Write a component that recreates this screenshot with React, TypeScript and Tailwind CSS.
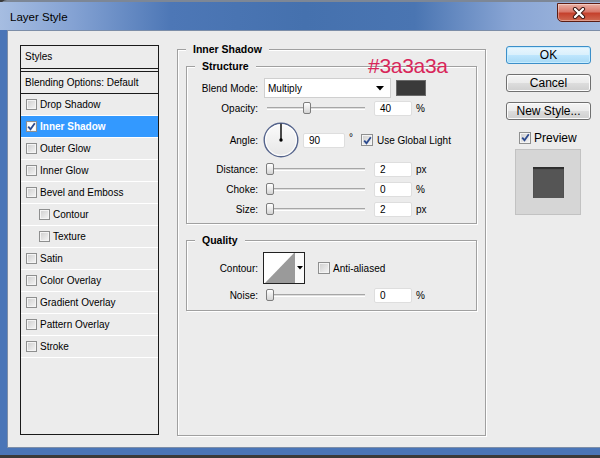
import React from "react";

const Check = ({ checked = false, small = false, selected = false }: { checked?: boolean; small?: boolean; selected?: boolean }) => (
  <div
    className={`${small ? "w-[11px] h-[11px]" : "w-[12px] h-[12px]"} shrink-0 border border-[#8e8f8f] ${
      selected ? "bg-white" : "bg-[linear-gradient(135deg,#cdcdcd,#f6f6f6)]"
    } shadow-[inset_0_0_0_1px_#f4f4f4] flex items-center justify-center`}
  >
    {checked && (
      <svg width="9" height="9" viewBox="0 0 9 9">
        <path d="M1.2 4.6 L3.5 7.2 L7.8 1.2" fill="none" stroke="#2c4a8e" strokeWidth="1.8" />
      </svg>
    )}
  </div>
);

const Slider = ({ pos }: { pos: number }) => (
  <div className="relative ml-[9px] w-[98px] h-[3px] border-t border-t-[#a6a6a6] border-b border-b-white bg-[#dedede]">
    <div
      className="absolute top-[-6px] w-[8px] h-[12px] rounded-[2px] border border-[#7d7d7d] bg-[linear-gradient(#ffffff,#d4d4d4)]"
      style={{ left: pos }}
    />
  </div>
);

const Field = ({ v, wide = false }: { v: string; wide?: boolean }) => (
  <div
    className={`${wide ? "w-[42px]" : "w-[38px]"} h-[15px] bg-white border border-[#dedede] rounded-[2px] pl-[5px] text-[10px] leading-[13px] text-black`}
  >
    {v}
  </div>
);

const Label = ({ t }: { t: string }) => (
  <div className="w-[71px] shrink-0 text-right text-[10px] leading-[13px] text-black">{t}</div>
);

const SliderRow = ({ label, value, unit, pos, mt }: { label: string; value: string; unit: string; pos: number; mt: string }) => (
  <div className={`flex items-center h-[15px] ${mt}`}>
    <Label t={label} />
    <Slider pos={pos} />
    <div className="ml-[9px]">
      <Field v={value} />
    </div>
    <div className="ml-[4px] text-[10px] leading-[13px]">{unit}</div>
  </div>
);

const items: { name: string; indent?: boolean; selected?: boolean }[] = [
  { name: "Drop Shadow" },
  { name: "Inner Shadow", selected: true },
  { name: "Outer Glow" },
  { name: "Inner Glow" },
  { name: "Bevel and Emboss" },
  { name: "Contour", indent: true },
  { name: "Texture", indent: true },
  { name: "Satin" },
  { name: "Color Overlay" },
  { name: "Gradient Overlay" },
  { name: "Pattern Overlay" },
  { name: "Stroke" },
];

const grayBtn =
  "w-[85px] h-[18px] rounded-[3px] border border-[#707070] bg-[linear-gradient(to_bottom,#f4f4f4_0%,#ebebeb_50%,#dddddd_51%,#cfcfcf_100%)] shadow-[inset_0_0_0_1px_#fcfcfc] text-[12px] leading-[16px] text-center text-black";

export default function App() {
  return (
    <div className="w-[600px] h-[458px] overflow-hidden bg-[#3a3a3a] font-['Liberation_Sans',Arial,sans-serif] text-black">
      <div className="w-[610px] h-[455px] flex flex-col rounded-tl-[7px] border-t-[2px] border-t-[#7d8796] bg-[#4a75b7]">
        {/* title bar */}
        <div className="h-[28px] shrink-0 flex items-start bg-[linear-gradient(to_right,#a6bde1_0%,#84a2d3_12%,#4d77b6_28%,#4571ae_50%,#4a75b2_68%,#8aa6d5_84%,#a3badf_100%)]">
          <div className="pl-[10px] pt-[8px] text-[11.5px] leading-[14px] text-black">Layer Style</div>
          <div className="ml-auto mr-[6px] mt-[1px] w-[47px] h-[19px] rounded-bl-[5px] rounded-br-[5px] border border-[#5b1d14] bg-[linear-gradient(to_bottom,#eab0a4_0%,#d9786a_45%,#c5412d_55%,#cf6a52_100%)] shadow-[inset_0_0_0_1px_rgba(255,255,255,0.35)] flex items-center justify-center">
            <svg width="14" height="12" viewBox="0 0 14 12" className="mr-[4px]">
              <path d="M3 2 L11 10 M11 2 L3 10" stroke="#3a1510" strokeWidth="4.2" strokeLinecap="round" />
              <path d="M3 2 L11 10 M11 2 L3 10" stroke="#ffffff" strokeWidth="2.4" strokeLinecap="round" />
            </svg>
          </div>
        </div>
        {/* content */}
        <div className="ml-[7px] mb-[7px] flex-1 border-l border-t border-b border-[#7d8ea8] bg-[#ececec] flex items-start pl-[12px]">
          {/* left styles panel */}
          <div className="mt-[14px] w-[139px] h-[390px] border border-[#1a1a1a] shrink-0 flex flex-col">
            <div className="h-[23px] border-b border-[#1a1a1a] pl-[4px] text-[10px] leading-[22px]">Styles</div>
            <div className="mt-[2px] h-[23px] border-t border-b border-[#1a1a1a] pl-[4px] text-[10px] leading-[21px]">
              Blending Options: Default
            </div>
            {items.map((it) => (
              <div
                key={it.name}
                className={`h-[22px] border-b border-white flex items-center ${it.indent ? "pl-[18px]" : "pl-[5px]"} ${
                  it.selected ? "bg-[#3399ff] text-white font-bold" : ""
                }`}
              >
                <Check small checked={it.selected} selected={it.selected} />
                <span className="ml-[3px] text-[10px] leading-[13px]">{it.name}</span>
              </div>
            ))}
          </div>

          {/* main group: Inner Shadow */}
          <div className="ml-[18px] mt-[18px] w-[309px] h-[387px] shrink-0 border border-[#a0a0a0] shadow-[inset_1px_1px_0_#fff,1px_1px_0_#fff]">
            <div className="-mt-[7px] ml-[8px] px-[7px] w-fit bg-[#ececec] text-[10.5px] font-bold leading-[13px]">Inner Shadow</div>

            {/* Structure */}
            <div className="relative ml-[8px] mt-[10px] w-[291px] h-[158px] border border-[#a0a0a0] shadow-[inset_1px_1px_0_#fff,1px_1px_0_#fff]">
              <div className="-mt-[7px] ml-[8px] px-[7px] w-fit bg-[#ececec] text-[10.5px] font-bold leading-[13px]">Structure</div>
              <div className="absolute left-[181px] top-[-13px] text-[21px] leading-[24px] tracking-[-0.3px] text-[#d8265a]">#3a3a3a</div>

              <div className="mt-[5px] flex items-center h-[20px]">
                <Label t="Blend Mode:" />
                <div className="ml-[6px] w-[127px] h-[20px] bg-white border border-[#cfcfcf] flex items-center pl-[3px] pr-[6px]">
                  <span className="text-[10px] leading-[13px]">Multiply</span>
                  <svg width="8" height="5" viewBox="0 0 8 5" className="ml-auto">
                    <path d="M0 0 L8 0 L4 4.5 Z" fill="#000" />
                  </svg>
                </div>
                <div className="ml-[5px] w-[30px] h-[16px] border border-[#6a6a6a] bg-[#3a3a3a]" />
              </div>

              <SliderRow label="Opacity:" value="40" unit="%" pos={36} mt="mt-[3px]" />

              <div className="mt-[6px] flex items-center h-[36px]">
                <Label t="Angle:" />
                <svg width="36" height="36" viewBox="0 0 36 36" className="ml-[5px] shrink-0">
                  <defs>
                    <linearGradient id="dialg" x1="0" y1="0" x2="0" y2="1">
                      <stop offset="0" stopColor="#fbfbfb" />
                      <stop offset="1" stopColor="#e6e6e6" />
                    </linearGradient>
                  </defs>
                  <circle cx="18" cy="18" r="16.8" fill="url(#dialg)" stroke="#55648c" strokeWidth="1.4" />
                  <circle cx="18" cy="18" r="15.4" fill="none" stroke="#ffffff" strokeWidth="1" />
                  <line x1="18" y1="1.8" x2="18" y2="18" stroke="#000" strokeWidth="1.4" />
                  <circle cx="18" cy="18" r="1.7" fill="#000" />
                </svg>
                <div className="ml-[4px]">
                  <Field v="90" wide />
                </div>
                <div className="ml-[4px] w-[12px] text-[10px] leading-[13px] self-start mt-[9px]">°</div>
                <Check checked />
                <span className="ml-[4px] text-[10px] leading-[13px]">Use Global Light</span>
              </div>

              <SliderRow label="Distance:" value="2" unit="px" pos={-1} mt="mt-[4px]" />
              <SliderRow label="Choke:" value="0" unit="%" pos={-1} mt="mt-[5px]" />
              <SliderRow label="Size:" value="2" unit="px" pos={-1} mt="mt-[5px]" />
            </div>

            {/* Quality */}
            <div className="ml-[8px] mt-[16px] w-[291px] h-[71px] border border-[#a0a0a0] shadow-[inset_1px_1px_0_#fff,1px_1px_0_#fff]">
              <div className="-mt-[7px] ml-[8px] px-[7px] w-fit bg-[#ececec] text-[10.5px] font-bold leading-[13px]">Quality</div>
              <div className="mt-[5px] flex items-center h-[32px]">
                <Label t="Contour:" />
                <div className="ml-[5px] w-[42px] h-[32px] border border-[#222] bg-white flex">
                  <svg width="30" height="30" viewBox="0 0 30 30" className="shrink-0">
                    <path d="M1 30 L30 0 L30 30 Z" fill="#9a9a9a" />
                  </svg>
                  <div className="flex-1 border-l border-[#9a9a9a] bg-[#fafafa] flex items-center justify-center">
                    <svg width="6" height="4" viewBox="0 0 6 4">
                      <path d="M0 0 L6 0 L3 3.5 Z" fill="#000" />
                    </svg>
                  </div>
                </div>
                <div className="ml-[13px]">
                  <Check />
                </div>
                <span className="ml-[3px] text-[10px] leading-[13px]">Anti-aliased</span>
              </div>
              <SliderRow label="Noise:" value="0" unit="%" pos={-1} mt="mt-[4px]" />
            </div>
          </div>

          {/* right column */}
          <div className="ml-[20px] mt-[15px] w-[85px] shrink-0 flex flex-col">
            <div className="w-[85px] h-[18px] rounded-[3px] border border-[#3c8fc9] bg-[linear-gradient(to_bottom,#eaf6fd_0%,#d9f0fc_50%,#bee6fd_51%,#a7d9f5_100%)] shadow-[inset_0_0_0_1px_#c6ecff] text-[12px] leading-[16px] text-center text-black">
              OK
            </div>
            <div className={`${grayBtn} mt-[10px]`}>Cancel</div>
            <div className={`${grayBtn} mt-[10px]`}>New Style...</div>
            <div className="mt-[11px] ml-[13px] flex items-center h-[13px]">
              <Check checked />
              <span className="ml-[3px] text-[12px] leading-[14px]">Preview</span>
            </div>
            <div className="mt-[5px] ml-[9px] w-[66px] h-[66px] bg-[#d6d6d6] border border-[#c2c2c2] flex items-center justify-center">
              <div className="w-[31px] h-[31px] bg-[#555555] shadow-[inset_0_2px_1px_#2e2e2e]" />
            </div>
          </div>
        </div>
      </div>
    </div>
  );
}
